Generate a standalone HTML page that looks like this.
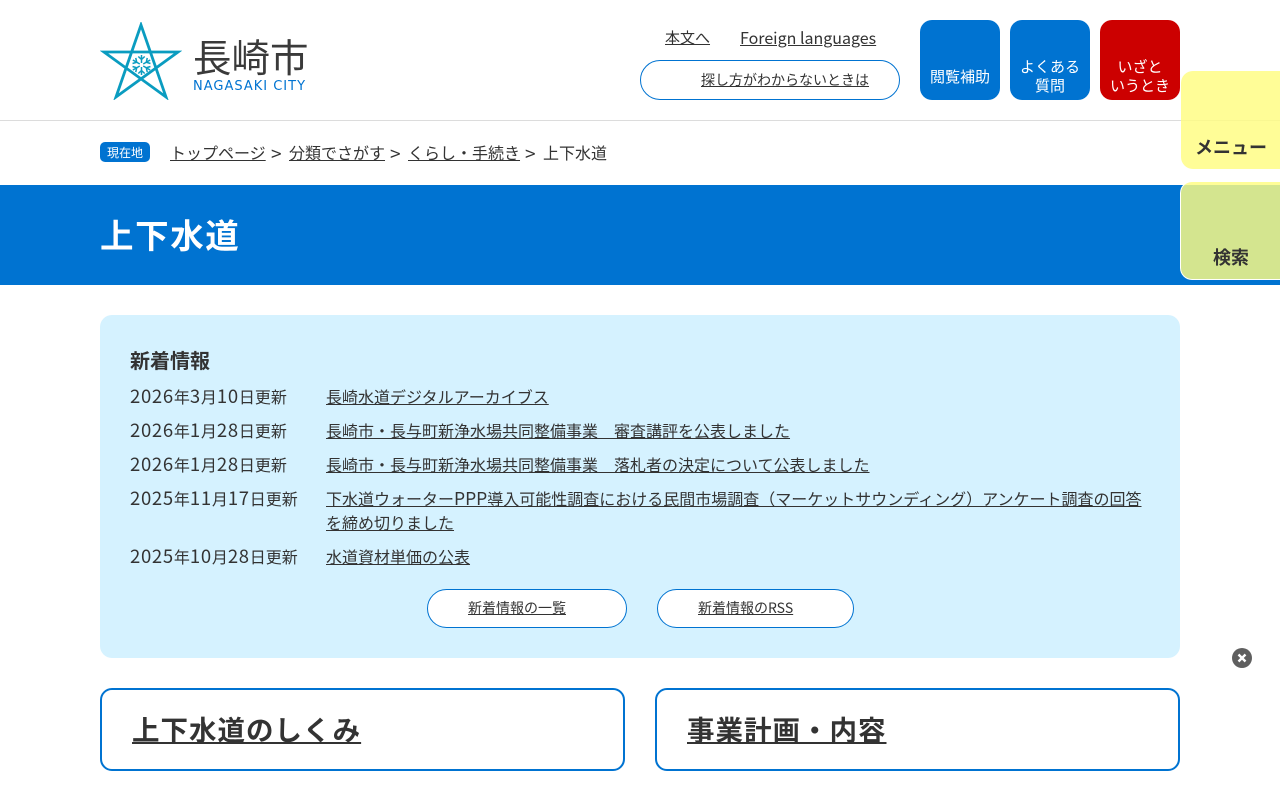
<!DOCTYPE html>
<html lang="ja">
<head>
<meta charset="utf-8">
<title>上下水道</title>
<style>
*{box-sizing:border-box;margin:0;padding:0}
html,body{width:1280px;height:800px;overflow:hidden;background:#fff}
body{position:relative;font-family:"Noto Sans CJK JP","Liberation Sans",sans-serif;font-size:16px;color:#333}
a{color:#333;text-decoration:underline}
.a{position:absolute;white-space:nowrap;line-height:24px}
.btn{position:absolute;top:20px;width:80px;height:80px;border-radius:12px;background:#0073d1;color:#fff;font-size:15px;line-height:18.5px;text-align:center}
.btn span{position:absolute;left:0;right:0;top:47.5px}
.btn span.t{top:38px}
.pill{position:absolute;background:#fff;border:1px solid #0073d1;border-radius:20px;font-size:14px;text-align:center}
.d{position:absolute;left:130px;line-height:24px;white-space:nowrap}
.d b{font-weight:400;font-size:18.5px;letter-spacing:.7px;line-height:1}
.l{position:absolute;left:326px;width:824px;line-height:24px}
.l b{font-weight:400;font-size:17.5px;line-height:1}
.box{position:absolute;top:688px;width:525px;height:83px;border:2px solid #0073d1;border-radius:12px;background:#fff}
.box a{position:absolute;left:30px;top:18px;font-size:27.5px;letter-spacing:1px;font-weight:700;line-height:40px;white-space:nowrap}
.g{font-size:19px}
</style>
</head>
<body>
<svg style="position:absolute;left:100px;top:22px" width="82" height="78" viewBox="0 0 82 78">
<polygon points="41,3 16,75 78,30 4,30 66,75" fill="none" stroke="#0a9cc0" stroke-width="2.8"/>
<g stroke="#0a9cc0" stroke-width="1.5" fill="none" transform="translate(41.5 43)">
<path d="M0-2V-10M-3.2-8.5L0-5.5 3.2-8.5"/>
<path transform="rotate(60)" d="M0-2V-10M-3.2-8.5L0-5.5 3.2-8.5"/>
<path transform="rotate(120)" d="M0-2V-10M-3.2-8.5L0-5.5 3.2-8.5"/>
<path transform="rotate(180)" d="M0-2V-10M-3.2-8.5L0-5.5 3.2-8.5"/>
<path transform="rotate(240)" d="M0-2V-10M-3.2-8.5L0-5.5 3.2-8.5"/>
<path transform="rotate(300)" d="M0-2V-10M-3.2-8.5L0-5.5 3.2-8.5"/>
</g>
</svg>
<div class="a" style="left:193px;top:33px;font-size:38.5px;line-height:46px;color:#3a3a3a">長崎市</div>
<div class="a" style="left:193px;top:78px;line-height:18px;letter-spacing:1px;color:#0073d1;font-family:'DejaVu Sans',sans-serif;font-size:13px">NAGASAKI CITY</div>

<a class="a" style="left:665px;top:26px;font-size:15px" href="#">本文へ</a>
<a class="a" style="left:740px;top:25px;font-family:'WenQuanYi Zen Hei','Noto Sans CJK JP',sans-serif" href="#">Foreign languages</a>
<div class="pill" style="left:640px;top:60px;width:260px;height:40px"><a style="position:absolute;left:60px;top:8px;line-height:22px;white-space:nowrap" href="#">探し方がわからないときは</a></div>

<div class="btn" style="left:920px"><span>閲覧補助</span></div>
<div class="btn" style="left:1010px"><span class="t">よくある<br>質問</span></div>
<div class="btn" style="left:1100px;background:#c00"><span class="t">いざと<br>いうとき</span></div>

<div style="position:absolute;left:0;top:120px;width:1280px;height:1px;background:#dcdcdc"></div>

<div class="a" style="left:100px;top:142px;width:50px;height:20px;background:#0073d1;border-radius:5px;color:#fff;font-size:12px;line-height:21px;text-align:center">現在地</div>
<a class="a" style="left:170px;top:140px" href="#">トップページ</a>
<div class="a g" style="left:271px;top:142px">&gt;</div>
<a class="a" style="left:289px;top:140px" href="#">分類でさがす</a>
<div class="a g" style="left:390px;top:142px">&gt;</div>
<a class="a" style="left:408px;top:140px" href="#">くらし・手続き</a>
<div class="a g" style="left:525px;top:142px">&gt;</div>
<div class="a" style="left:543px;top:140px">上下水道</div>

<div style="position:absolute;left:0;top:185px;width:1280px;height:100px;background:#0073d1"></div>
<div class="a" style="left:100px;top:211px;font-size:33.5px;letter-spacing:1.6px;line-height:46px;font-weight:700;color:#fff">上下水道</div>

<div style="position:absolute;left:1181px;top:71px;width:99px;height:98px;background:rgba(255,253,130,.83);border-radius:12px 0 0 12px"></div>
<div class="a" style="left:1195px;top:135px;font-size:18px;font-weight:700">メニュー</div>
<div style="position:absolute;left:1180px;top:181px;width:100px;height:99px;background:rgba(255,253,130,.83);border:1px solid #fff;border-right:0;border-radius:12px 0 0 12px"></div>
<div class="a" style="left:1213px;top:245px;font-size:18px;font-weight:700">検索</div>

<div style="position:absolute;left:100px;top:315px;width:1080px;height:343px;background:#d5f2ff;border-radius:12px"></div>
<div class="a" style="left:130px;top:347px;font-size:20px;font-weight:700;line-height:26px">新着情報</div>

<div class="d" style="top:384px"><b>2026</b>年<b>3</b>月<b>10</b>日更新</div>
<a class="l" style="top:384px" href="#">長崎水道デジタルアーカイブス</a>
<div class="d" style="top:418px"><b>2026</b>年<b>1</b>月<b>28</b>日更新</div>
<a class="l" style="top:418px" href="#">長崎市・長与町新浄水場共同整備事業　審査講評を公表しました</a>
<div class="d" style="top:452px"><b>2026</b>年<b>1</b>月<b>28</b>日更新</div>
<a class="l" style="top:452px" href="#">長崎市・長与町新浄水場共同整備事業　落札者の決定について公表しました</a>
<div class="d" style="top:486px"><b>2025</b>年<b>11</b>月<b>17</b>日更新</div>
<a class="l" style="top:486px" href="#">下水道ウォーター<b>PPP</b>導入可能性調査における民間市場調査（マーケットサウンディング）アンケート調査の回答を締め切りました</a>
<div class="d" style="top:544px"><b>2025</b>年<b>10</b>月<b>28</b>日更新</div>
<a class="l" style="top:544px" href="#">水道資材単価の公表</a>

<div class="pill" style="left:427px;top:589px;width:200px;height:39px"><a style="position:absolute;left:40px;top:7px;line-height:22px;white-space:nowrap" href="#">新着情報の一覧</a></div>
<div class="pill" style="left:657px;top:589px;width:197px;height:39px"><a style="position:absolute;left:40px;top:7px;line-height:22px;white-space:nowrap" href="#">新着情報のRSS</a></div>

<div class="box" style="left:100px"><a href="#">上下水道のしくみ</a></div>
<div class="box" style="left:655px"><a href="#">事業計画・内容</a></div>

<svg style="position:absolute;left:1232px;top:648px" width="20" height="20" viewBox="0 0 20 20">
<circle cx="10" cy="10" r="10" fill="#5f5f5f"/>
<path d="M6.5 6.5l7 7M13.5 6.5l-7 7" stroke="#fff" stroke-width="2.4"/>
</svg>
</body>
</html>
